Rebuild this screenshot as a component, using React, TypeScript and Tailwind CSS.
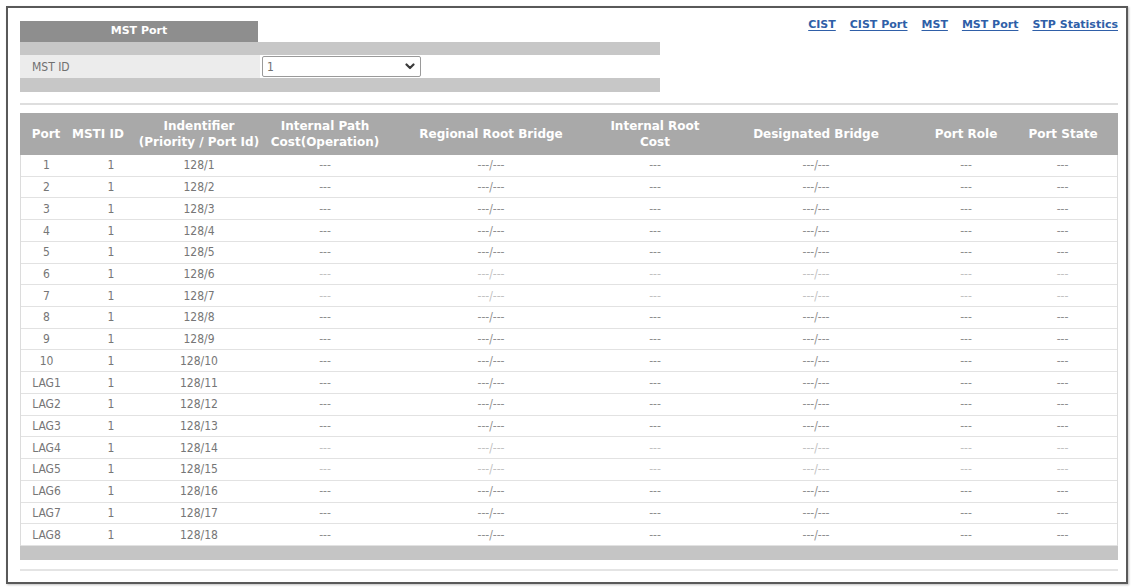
import React from "react";

const rows: { port: string; light?: boolean }[] = [
  { port: "1" },
  { port: "2" },
  { port: "3" },
  { port: "4" },
  { port: "5" },
  { port: "6", light: true },
  { port: "7", light: true },
  { port: "8" },
  { port: "9" },
  { port: "10" },
  { port: "LAG1" },
  { port: "LAG2" },
  { port: "LAG3" },
  { port: "LAG4", light: true },
  { port: "LAG5", light: true },
  { port: "LAG6" },
  { port: "LAG7" },
  { port: "LAG8" },
];

const bodyFont = {
  fontFamily: '"Liberation Sans Narrow", "DejaVu Sans Condensed", "Liberation Sans", sans-serif',
};

function Chevron() {
  return (
    <svg width="10" height="7" viewBox="0 0 10 7" className="mr-[5px]">
      <path d="M1.5 1.5 L5 5 L8.5 1.5" fill="none" stroke="#3a3a3a" strokeWidth="2.2" strokeLinecap="round" strokeLinejoin="round" />
    </svg>
  );
}

export default function App() {
  const links = ["CIST", "CIST Port", "MST", "MST Port", "STP Statistics"];
  return (
    <div className="w-[1131px] h-[587px] bg-white overflow-hidden font-['Liberation_Sans',sans-serif]">
      <div className="ml-[6px] mt-[6px] w-[1122px] h-[578px] border-2 border-[#595959] bg-white pl-[12px] pr-[8px] pt-[13px] shadow-[1px_1px_2px_rgba(0,0,0,0.25)]">
        {/* top section */}
        <div className="flex justify-between items-start">
          <div className="w-[640px]">
            <div className="w-[238px] h-[21px] bg-[#8e8e8e] flex items-center justify-center text-white text-[11px] font-bold font-['DejaVu_Sans',sans-serif]">
              MST Port
            </div>
            <div className="h-[13px] bg-[#c7c7c7]" />
            <div className="h-[23px] flex">
              <div className="w-[240px] bg-[#ececec] flex items-center pl-[12px] text-[12px] text-[#707070]" style={bodyFont}>
                MST ID
              </div>
              <div className="flex-1 bg-white flex items-center pl-[2px] pr-[2px]">
                <div className="w-[159px] h-[21px] border border-[#9a9a9a] rounded-[2px] bg-white flex items-center justify-between pl-[4px] text-[12px] text-[#707070]" style={bodyFont}>
                  <span>1</span>
                  <Chevron />
                </div>
              </div>
            </div>
            <div className="h-[14px] bg-[#c7c7c7]" />
          </div>
          <div className="flex gap-[14px] -mt-[4px] text-[11px] font-bold text-[#2f5fa8] font-['DejaVu_Sans',sans-serif]">
            {links.map((l) => (
              <span key={l} className="underline underline-offset-2">
                {l}
              </span>
            ))}
          </div>
        </div>

        {/* separator */}
        <div className="mt-[11px] h-[2px] bg-[#dedede]" />

        {/* table */}
        <div className="mt-[8px]">
          <div className="h-[42px] bg-[#a9a9a9] flex items-center text-white text-[12px] font-bold leading-[16px] font-['DejaVu_Sans',sans-serif] text-center">
            <div className="w-[52px]">Port</div>
            <div className="w-[56px] pr-[16px] whitespace-nowrap">MSTI ID</div>
            <div className="w-[142px] whitespace-nowrap">
              Indentifier
              <br />
              (Priority / Port Id)
            </div>
            <div className="w-[110px] whitespace-nowrap">
              Internal Path
              <br />
              Cost(Operation)
            </div>
            <div className="w-[222px]">Regional Root Bridge</div>
            <div className="w-[106px]">
              Internal Root
              <br />
              Cost
            </div>
            <div className="w-[216px]">Designated Bridge</div>
            <div className="w-[84px]">Port Role</div>
            <div className="flex-1">Port State</div>
          </div>
          <div className="border-x border-[#dcdcdc]">
            {rows.map((r, i) => {
              const dash = r.light ? "text-[#c2c2c2]" : "text-[#8f8f8f]";
              return (
                <div
                  key={r.port}
                  className="h-[21.72px] flex items-center text-center text-[12px] text-[#767676] border-b border-[#e2e2e2]"
                  style={bodyFont}
                >
                  <div className="w-[51px]">{r.port}</div>
                  <div className="w-[56px] pl-[22px]">1</div>
                  <div className="w-[142px]">128/{i + 1}</div>
                  <div className={`w-[110px] ${dash}`}>---</div>
                  <div className={`w-[222px] ${dash}`}>---/---</div>
                  <div className={`w-[106px] ${dash}`}>---</div>
                  <div className={`w-[216px] ${dash}`}>---/---</div>
                  <div className={`w-[84px] ${dash}`}>---</div>
                  <div className={`flex-1 ${dash}`}>---</div>
                </div>
              );
            })}
          </div>
          <div className="h-[14px] bg-[#c5c5c5]" />
        </div>

        <div className="mt-[9px] h-[2px] bg-[#e4e4e4]" />
      </div>
    </div>
  );
}
